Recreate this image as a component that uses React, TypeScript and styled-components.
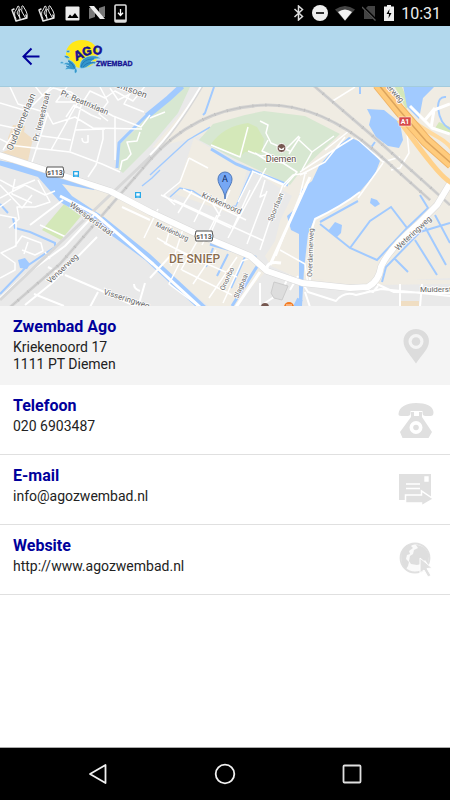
import React from 'react';
import styled, { createGlobalStyle } from 'styled-components';

const GlobalStyle = createGlobalStyle`
  * { box-sizing: border-box; }
  body { margin: 0; background: #fff; font-family: Roboto, "Noto Sans", sans-serif; }
`;

const Screen = styled.div`
  display: flex;
  flex-direction: column;
  min-height: 100vh;
`;

const StatusBar = styled.div`
  display: flex;
  align-items: center;
  justify-content: space-between;
  height: 26px;
  padding: 0 9px 0 11px;
  background: #000;
  color: #ececec;
`;

const StatusGroup = styled.div<{ $gap: number }>`
  display: flex;
  align-items: center;
  gap: ${(p) => p.$gap}px;
  svg { display: block; }
`;

const Clock = styled.time`
  font-size: 16px;
  line-height: 26px;
  font-weight: 400;
  padding-top: 2px;
`;

const AppBar = styled.header`
  display: flex;
  align-items: center;
  gap: 19px;
  height: 61px;
  padding: 0 21px;
  background: #b2d8ed;
  border-bottom: 1px solid #a3cbdd;
`;

const IconButton = styled.button`
  display: flex;
  align-items: center;
  justify-content: center;
  padding: 0;
  border: 0;
  background: none;
  cursor: pointer;
  svg { display: block; }
`;

const MapView = styled.div`
  height: 219px;
  overflow: hidden;
  background: #e9e9e9;
  svg { display: block; width: 100%; height: 100%; }
`;

const ContactRow = styled.a<{ $highlight?: boolean }>`
  display: flex;
  align-items: center;
  justify-content: space-between;
  min-height: ${(p) => (p.$highlight ? 79 : 70)}px;
  padding: 0 16px 0 13px;
  background: ${(p) => (p.$highlight ? '#f4f4f4' : '#fff')};
  border-bottom: ${(p) => (p.$highlight ? 'none' : '1px solid #e0e0e0')};
  color: #222;
  text-decoration: none;
  svg { display: block; flex: none; }
`;

const RowText = styled.div`
  align-self: flex-start;
  padding-top: 10px;
`;

const RowTitle = styled.h2`
  margin: 0 0 2px;
  font-size: 16px;
  line-height: 21px;
  font-weight: 700;
  color: #00009b;
`;

const RowLine = styled.p`
  margin: 0;
  font-size: 14px;
  line-height: 17px;
`;

const NavBar = styled.nav`
  display: flex;
  align-items: center;
  justify-content: center;
  gap: 103px;
  height: 53px;
  margin-top: auto;
  background: #000;
  border-top: 1px solid #aaa;
`;

const HandsIcon = () => (
  <svg width="18" height="18" viewBox="0 0 18 18" fill="none" stroke="#e6e6e6" strokeWidth="1" strokeLinejoin="round" strokeLinecap="round">
    <path d="M3 5 1 6l4 11 11-3-1-3" strokeWidth="1.500" />
    <path d="M5 15Q2 9 5 6l2-4q2 0 1 3L6 9l3 5M9 15 8 9l1-4q2 0 2 3l3 5M11 5Q10 1 12 2l3 5q2 4 1 6l-4 2" />
  </svg>
);
const PictureIcon = () => (
  <svg width="15" height="15" viewBox="0 0 15 15">
    <rect x=".5" y=".5" width="14" height="14" rx="1" fill="#eee" />
    <path d="m2.500 12 2.500-3.500 2 2L10 7l3.500 5z" fill="#000" />
  </svg>
);
const NIcon = () => (
  <svg width="16" height="14" viewBox="0 0 16 14">
    <path d="M0 2h6v9l-6 2zM10 2l6-2v11h-6z" fill="#777" />
    <path d="M0 0h5l11 13h-5z" fill="#eee" />
  </svg>
);
const DownloadIcon = () => (
  <svg width="13" height="19" viewBox="0 0 13 19">
    <rect x="1" y="1" width="11" height="17" rx="1" fill="none" stroke="#ddd" strokeWidth="1.600" />
    <path d="M1 15.500h11V18H1z" fill="#ddd" />
    <path d="M6.500 5v6M4 8.800l2.500 2.700L9 8.800" fill="none" stroke="#fff" strokeWidth="1.300" />
  </svg>
);
const BluetoothIcon = () => (
  <svg width="12" height="16" viewBox="0 0 12 16" fill="none" stroke="#ddd" strokeWidth="1.500">
    <path d="m1.500 4 8 7.500-4 3.500V1l4 3.500-8 7.500" />
  </svg>
);
const DoNotDisturbIcon = () => (
  <svg width="16" height="16" viewBox="0 0 16 16">
    <circle cx="8" cy="8" r="8" fill="#eee" />
    <path d="M4 8h8" stroke="#000" strokeWidth="1.600" />
  </svg>
);
const WifiIcon = () => (
  <svg width="20" height="17" viewBox="0 0 20 17">
    <path d="M0 4.500Q10-2.500 20 4.500L10 16z" fill="#444" />
    <path d="M3 7Q10 2 17 7l-7 8.500z" fill="#f2f2f2" />
  </svg>
);
const NoSimIcon = () => (
  <svg width="15" height="16" viewBox="0 0 15 16">
    <path d="M6 1h7v13H2V5z" fill="#444" />
    <path d="m0 1 14 14" stroke="#000" strokeWidth="2.500" />
    <path d="m0 2 13.500 13.500" stroke="#555" strokeWidth="1.300" />
  </svg>
);
const BatteryIcon = () => (
  <svg width="10" height="16" viewBox="0 0 10 16">
    <path d="M3 0h4v1.500h3V16H0V1.500h3z" fill="#eee" />
    <path d="M5.500 4 2.500 9H5l-.5 4.500 3-5.500H5z" fill="#000" />
  </svg>
);

const BackIcon = () => (
  <svg width="20" height="20" viewBox="0 0 20 20" fill="none" stroke="#00009b" strokeWidth="2">
    <path d="M18.500 10.500h-16M10.500 2.500l-8 8 8 8" />
  </svg>
);

const Logo = () => (
  <svg width="76" height="36" viewBox="60 39 76 36" role="img" aria-label="Ago Zwembad">
    <ellipse cx="82" cy="55" rx="16" ry="14" fill="#ffe817" />
    <g fill="#3596cb" stroke="#b2e1f5" strokeWidth=".6">
      <path d="M80 69c-1-6 3-11 10-12 6-1 9 1 11 3-5-1-8 0-10 3 3-1 5 0 7 1-6 0-8 2-11 4-2 1-5 2-7 1z" />
      <path d="M76 71c1-5-3-9-9-11 2 2 1 3 2 4-3-1-5 0-6 2 3-1 5 0 7 2-3-1-4 1-5 3 4-2 6 0 11 0z" />
      <path d="M64 57c1-1 4-1 6 2-3 1-5 0-6-2zM66 52c2-1 4-1 4 1-2 1-3 1-4-1zM60 64c1-2 3-1 4 0-1 1-3 1-4 0zM75 69c2 0 3 4 1 5s-2-3-1-5z" />
    </g>
    <path d="M81 68c2-6 6-8 13-8M83 68c3-4 7-5 12-4M68 62q5 2 7 8M66 67l4 1" fill="none" stroke="#1d76b5" strokeWidth=".9" />
    <g fill="#151292" stroke="#151292" strokeWidth=".6" fontFamily="Liberation Sans" fontWeight="700">
      <text x="76" y="62" fontSize="13" transform="rotate(-24 76 62)">A</text>
      <text x="83" y="57" fontSize="12" transform="rotate(-10 83 57)">G</text>
      <text x="92" y="54" fontSize="12" transform="rotate(14 92 54)">O</text>
    </g>
    <text x="96" y="67" fontSize="7" fontWeight="700" fontFamily="Liberation Sans" fill="#151292" stroke="#151292" strokeWidth=".3">ZWEMBAD</text>
  </svg>
);

const Shield = ({ x, y }: { x: number; y: number }) => (
  <g>
    <path d={`M${x - 8} ${y - 5}h16l1 5-1 5h-16l-1-5z`} fill="#fff" stroke="#555" strokeWidth="1" />
    <text x={x} y={y + 3} textAnchor="middle" fontSize="7" fontWeight="700" fill="#555">s113</text>
  </g>
);

const StationMark = ({ x, y }: { x: number; y: number }) => (
  <g>
    <rect x={x - 3} y={y - 3} width="6" height="6" fill="#28a8e8" />
    <path d={`M${x - 1.5} ${y - 1.5}h3v2h-3zM${x - 1.5} ${y + 2}h3`} fill="#fff" stroke="#fff" strokeWidth=".5" />
  </g>
);

const railways = [
  'M8 309 L60 264 L118 197 L150 160 C180 126 218 106 268 105 C310 105 345 125 375 151 L430 200',
  'M313 85 L375 138 L450 205',
];

const mainRoad = 'M-4 154 L55 173 L110 191 L150 212 L195 233 L250 256 L267 271 L302 283 L350 288 L368 287 Q379 281 381 267 Q388 250 418 224 L437 205 L452 180';

const CityMap = () => (
  <svg viewBox="0 87 450 219" preserveAspectRatio="xMidYMid slice" role="img" aria-label="Kaart van Diemen">
    <rect y="80" width="450" height="235" fill="#e9e9e9" />
    <g fill="#f0ece3">
      <path d="M202 85h248v193l-75 4-75-3-29-13-6-10 10-15 5-20 12-25-91-60-49 12 36-43z" />
      <path d="M194 138 247 170 235 215 175 194z" />
      <path d="M30 170 55 173 110 192 150 214 195 235 250 257 267 270 235 306 208 306 150 256 85 208z" />
    </g>
    <path d="M302 280h148v4l-77 1-71-1z" fill="#f0ece3" />
    <path d="M13 125 25 126 24 132 33 139 31 147 28 161 0 153 8 150 8 138zM0 158 57 174 80 185 33 174z" fill="#f0dec3" />
    <path d="M401 301h18v5h-18z" fill="#f0dec3" />
    <g fill="#d7e7d1">
      <path d="M150 113 138 127 119 145 118 169 123 173 151 145 178 113 190 87H181z" />
      <path d="M199 140 213 124 245 115 264 111 305 116 340 134 324 149 300 172 290 185 235 159z" />
    </g>
    <g fill="#d4e8b9">
      <path d="M211 144Q224 126 248 123L257 127 264 139 262 153 245 152 240 157z" />
      <path d="M64 204 L81 216 L61 240 L42 230z" />
      <path d="M394 85h7l9 20-4 4zM434 130l5-8 11 5v8z" />
    </g>
    <g fill="#a1caff">
      <path d="M349 137 L363 143 L373 152 L380 161 L375 174 L357 195 L337 208 L314 220 L308 234 L304 270 L302 306 H299 V234 L291 230 L287 216 L295 209 L301 190 L312 181 L319 166 L333 150z" />
      <path d="M367 109 L384 110 L400 123 L403 140 L399 148 L388 146 L376 137 L369 125 L371 117z" />
      <path d="M403 85 H436 L423 98 L419 119 L407 107z" />
      <path d="M18 260 L25 258 L30 264 L27 269 L20 268z" />
      <path d="M328 231 L335 222 L342 225 L341 233 L337 237z" />
      <path d="M371 198 L377 200 L380 204 L375 207 L370 203z" />
      <path d="M-2 160 L38 168 L60 178 L95 187 L94 190 L62 184 L72 196 L104 217 L150 254 L207 307 H196 L145 260 L88 218 L60 202 L38 177 L-2 165z" />
    </g>
    <g fill="none" stroke="#a1caff">
      <path d="m147 116 22-18 13-12M300 299l-4 8" strokeWidth="6" />
      <path d="M150 112 119 143 117 168M211 149 236 164 288 185M210 244 255 257 258 265 232 306" strokeWidth="3" />
      <path d="M0 294 27 266 55 247 55 243 30 232 15 228 13 218M0 204 8 213M214 87 205 113 203 115M446 97Q438 96 438 108Q440 124 450 129M360 86v8M370 149l5-7" strokeWidth="2" />
      <path d="m209 128-21 12-38 35M193 137l17-10M251 172l-15 34-10 2M170 197l10-9 13 3 14 9M142 186l10-8 8-8M228 195l-3 3" strokeWidth="1.400" />
      <path d="M320 224 350 248 377 260 407 228 391 207 370 221 350 248M320 222 358 201M407 228 428 208 420 195M382 282 386 267 420 232 450 223M415 240l22 35M425 227l21 38M435 215l15 28M394 258l14 14" strokeWidth="2" />
      <path d="m213 248-7 19M228 254l-11 22M245 257l-14 31" strokeWidth="2" />
    </g>
    <g fill="none" stroke="#fff" strokeWidth="1.500" strokeLinejoin="round">
      <path d="M0 103l27 8 25-25M10 87 18 104 47 113 53 124 75 117 93 128 142 129M27 111 3 150M48 113 31 165 28 162M79 100 51 150M82 102 70 151M57 89l30 13 26 14 28 11 9-12M67 87l-11 15 31 0M35 86l8 10 10-8 18 4 12 10 7-11 15 7 10-7 18 10 13-16M0 125l14 3M0 139l8 4M8 145l62 7 32 12 18 8M103 129 103 139 96 165 88 177M115 117v43M75 130l30-1M88 135v7q-6 2-6-4M66 117l8-12 17 10 10 4M35 135l36 5" />
      <path d="M120 170l2-9 5-2 4-5-4-12 10-1 3-9M132 90l-8 14 20 8M150 118l15-6M110 88l8 12 12-6M100 87l8 15-9 12 9 7" />
      <path d="M0 180l15 8 20-8M0 198l25-13 20 10 10-4M15 179l-3 15 20 9M38 180l12 22-15 5-18 0 2 12-10 9M0 185l22 23 10-13M0 207l11-8M0 215l16 3 0 28-15 7 14 10 0 7-15 8M15 246l7-10 19 7 2 8-8 4-13-5M45 252l5 7M28 242l-4 12M40 225l26 12" />
      <path d="M0 298 25 275 65 246 95 214M63 200l-33 25M25 305l27-22 45-46M65 275l37 16 48 22M34 294l30 12M98 292l-8 15M145 283l-7 24M134 284q0 5 6 7M122 207l28 13M63 275l-15-8M150 278l22-24" strokeWidth="2" />
      <path d="M180 182 189 158M189 158l19 10M180 182l-16 13 11 10M208 196l12 20M202 245l15-30M250 190l-18 40M252 171l31 14 10-10 14-2M253 172l-15 30M161 195l70 33M174 200l90 41M183 189l63 31M178 213l14-22M194 222l14-28M212 230l18-40M228 238l38-70M247 244l20-53M260 250l15-45M260 174l23 10-5 15M265 180l-5 17 6-3" />
      <path d="M158 209 144 238M172 222 166 243M183 229 171 266M200 236 181 270M216 250 193 284M237 257l-28 41M164 243l33 16M182 253l55 24M157 238l45 26M182 270l50 25M179 264l-10 20 28 21M250 258l-8 3-19 42" />
      <path d="M305 174 300 195 276 256M280 250 305 264 308 285M355 87l-24 15M300 172q30-20 53-34M325 150l24-19M300 175l25-13 20-25M355 137l28 25 17-5M383 163l-25 35M407 133l2 20-9 15-9 2" />
      <path d="M260 121l8 4-2 8 5 10 19 8M268 140l-6 11 22 10M248 127l-8 30-29-12M248 151l13 5 7-1 16 8M255 153l11 7 17 3 14 9-13 15M284 151l15-15M289 154l11-17M299 140l13 12-10 18M312 152l22-16" />
      <path d="M310 285q-2-48 5-66 27-13 45-27M303 284l5 8 28 9q8-10 20-6l25-6 70 7M355 287l18 5 5-6M400 284v22M305 292l5 15M377 284l17 8 56 1M420 307l2-23M260 283v22M290 275l-10 18-18 12M298 276l-8 14" strokeWidth="2" />
      <path d="M410 106l22 22 18 6M431 128l3-18 16-6M425 120l10-12" strokeWidth="3" />
    </g>
    <path d="M271 293l3-11 14 4-6 14-8-2z" fill="#ddd" stroke="#ccc" strokeWidth="1" />
    <path d="M202 86Q175 132 150 157L0 300" fill="none" stroke="#d8d8d8" strokeWidth="3" />
    <path d="M201 86Q175 130 150 155" fill="none" stroke="#fff" strokeWidth="2" />
    {railways.map((d) => (
      <g key={d} fill="none">
        <path d={d} stroke="#d2d2d2" strokeWidth="3" />
        <path d={d} stroke="#bdbdbd" strokeWidth="3" strokeDasharray="1 12" />
        <path d={d} stroke="#c5c5c5" strokeWidth="1" />
      </g>
    ))}
    <g fill="none" strokeLinejoin="round">
      <path d={mainRoad} stroke="#dadada" strokeWidth="7" />
      <path d={mainRoad} stroke="#fff" strokeWidth="6" />
      <path d="m60 196 35 18 58 50 48 44M260 272 236 307M270 265 310 177M267 272q-2-12 14-9" stroke="#fff" strokeWidth="3" />
    </g>
    <g fill="none">
      <path d="M399 120Q419 148 432 164T452 183" stroke="#ffd18a" strokeWidth="5" />
      <path d="M405 116q20 14 31 20t16 13" stroke="#ffda9f" strokeWidth="4" />
      <path d="M378 84 400 111 426 141 452 164" stroke="#f0b568" strokeWidth="12" />
      <path d="M378 84 400 111 426 141 452 164" stroke="#ffcb7c" strokeWidth="10" />
      <path d="M378 84 400 111 426 141 452 164" stroke="#dda45d" strokeWidth="1.500" />
    </g>
    <rect x="399" y="117" width="12" height="9" fill="#d74949" stroke="#fff" strokeWidth=".5" />
    <text x="405" y="124" textAnchor="middle" fontSize="7" fontWeight="700" fill="#fff">A1</text>
    <Shield x={55} y={172} />
    <Shield x={204} y={236} />
    <StationMark x={76} y={174} />
    <StationMark x={138} y={195} />

    <g fill="#666" stroke="#fff" strokeWidth="1.500" paintOrder="stroke" fontSize="8">
      <text transform="translate(12 151) rotate(-67)" fontSize="9">Ouddiemerlaan</text>
      <text transform="translate(38 142) rotate(-76)">Pr. Irenestraat</text>
      <text transform="translate(60 95) rotate(23)">Pr. Beatrixlaan</text>
      <text transform="translate(108 84) rotate(21)" fontSize="9">Plantsoen</text>
      <text transform="translate(69 206) rotate(36)">Weesperstraat</text>
      <text transform="translate(50 284) rotate(-43)">Venserweg</text>
      <text transform="translate(103 294) rotate(18)">Visseringweg</text>
      <text transform="translate(155 226) rotate(25)" fontSize="7">Mariënburg</text>
      <text transform="translate(201 197) rotate(24)">Kriekenoord</text>
      <text transform="translate(272 222) rotate(-67)" fontSize="7">Sportlaan</text>
      <text transform="translate(224 291) rotate(-65)" fontSize="7">Onoribo</text>
      <text transform="translate(238 299) rotate(-67)" fontSize="7">Slagbaai</text>
      <text transform="translate(312 277) rotate(-88)" fontSize="7">Overdiemerweg</text>
      <text transform="translate(398 251) rotate(-43)">Weteringweg</text>
      <text transform="translate(386 87) rotate(48)">erweg</text>
      <text transform="translate(420 292)">Muiderstr</text>
      <text x="281" y="162" textAnchor="middle" fontSize="9" fill="#5b4840">Diemen</text>
      <text x="169" y="263" fontSize="12" fontWeight="500" fill="#8a6d50">DE SNIEP</text>
    </g>
    <circle cx="281.500" cy="148" r="4.500" fill="#765850" stroke="#fff" />
    <path d="M278.500 147l3 2 3-2-1 3h-4z" fill="#fff" />
    <circle cx="265" cy="307" r="4" fill="#765850" />
    <circle cx="289" cy="307" r="5" fill="#f37c22" />
    <path d="M287 304v3M289 304v3M291 304v3" stroke="#fff" strokeWidth=".8" />
    <path d="M225 199C225 190 218 186 218 179a7 7 0 0 1 14 0c0 7-7 11-7 20z" fill="#76a7f4" stroke="#4d78ba" strokeWidth="1" />
    <text x="225" y="182" textAnchor="middle" fontSize="9" fill="#102b62">A</text>
  </svg>
);

const PinIcon = () => (
  <svg width="35" height="36" viewBox="0 0 35 36">
    <path fillRule="evenodd" fill="#dcdcdc" d="M17 1C10 1 4.500 6 4.500 13c0 8 7 14 12.500 22.500C22.500 27 30 21 30 13 30 6 24 1 17 1zm0 5a7.500 7.500 0 1 1 0 15 7.500 7.500 0 0 1 0-15z" />
    <circle cx="17" cy="13.500" r="4.300" fill="#dcdcdc" />
  </svg>
);
const PhoneIcon = () => (
  <svg width="36" height="36" viewBox="0 0 36 36" fill="#e0e0e0">
    <path d="M.5 12C1 5 8 1 18 1s17 3 17.500 9c0 3-1 4-3 4h-5c-2 0-3-1-3-4V9h-12v2c0 2-1 3-3 3H3c-2 0-2.500-1-2.500-2z" />
    <path fillRule="evenodd" d="M13 10h3v4h5v-4h3v5l10 15-3.500 6h-26L2 30l11-15zm5 9a6.500 6.500 0 1 0 0 13 6.500 6.500 0 0 0 0-13z" />
    <circle cx="18" cy="25.500" r="2.800" />
  </svg>
);
const MailIcon = () => (
  <svg width="36" height="34" viewBox="0 0 36 34">
    <path d="M1 1h32v26H1z" fill="#e0e0e0" />
    <path d="M27 4h3v4h-3zM8 11h14M8 15.500h14" fill="#fff" stroke="#fff" strokeWidth="1.400" />
    <path d="M7.500 22h16v-4l12 8-12 7v-3h-16z" fill="#e0e0e0" stroke="#fff" strokeWidth="1.500" />
  </svg>
);
const WebIcon = () => (
  <svg width="35" height="36" viewBox="0 0 35 36">
    <circle cx="16" cy="16" r="14.500" fill="#fafafa" stroke="#e0e0e0" strokeWidth="1.800" />
    <path d="M3 10C5 4 9 2 15 2l-3 2 2 2-4 3 1 3-3 1-1 4 3 3-1 4-2 3C3 24 1 17 3 10zM17 3c7 0 12 5 13 11l-1 8-3-4-4 4-4 1-6-1-2-3 1-5 3-2 1-4 4-2z" fill="#dedede" />
    <path d="m21 16 12 10-5 .500 4 7-3 1.500-4-7-4 3z" fill="#e0e0e0" stroke="#fff" />
  </svg>
);

const contacts = [
  { title: 'Zwembad Ago', lines: ['Kriekenoord 17', '1111 PT Diemen'], href: 'geo:0,0?q=Kriekenoord+17+Diemen', Icon: PinIcon, highlight: true },
  { title: 'Telefoon', lines: ['020 6903487'], href: 'tel:0206903487', Icon: PhoneIcon },
  { title: 'E-mail', lines: ['info@agozwembad.nl'], href: 'mailto:info@agozwembad.nl', Icon: MailIcon },
  { title: 'Website', lines: ['http://www.agozwembad.nl'], href: 'http://www.agozwembad.nl', Icon: WebIcon },
];

export default function App() {
  return (
    <>
      <GlobalStyle />
      <Screen>
        <StatusBar>
          <StatusGroup $gap={9}>
            <HandsIcon />
            <HandsIcon />
            <PictureIcon />
            <NIcon />
            <DownloadIcon />
          </StatusGroup>
          <StatusGroup $gap={7}>
            <BluetoothIcon />
            <DoNotDisturbIcon />
            <WifiIcon />
            <NoSimIcon />
            <BatteryIcon />
            <Clock>10:31</Clock>
          </StatusGroup>
        </StatusBar>
        <AppBar>
          <IconButton type="button" aria-label="Terug"><BackIcon /></IconButton>
          <Logo />
        </AppBar>
        <MapView><CityMap /></MapView>
        <main>
          {contacts.map(({ title, lines, href, Icon, highlight }) => (
            <ContactRow key={title} href={href} $highlight={highlight}>
              <RowText>
                <RowTitle>{title}</RowTitle>
                {lines.map((line) => <RowLine key={line}>{line}</RowLine>)}
              </RowText>
              <Icon />
            </ContactRow>
          ))}
        </main>
        <NavBar>
          <IconButton type="button" aria-label="Vorige">
            <svg width="24" height="24" viewBox="0 0 24 24"><path d="M19.500 3v18L4 12z" fill="none" stroke="#f0f0f0" strokeWidth="1.800" strokeLinejoin="round" /></svg>
          </IconButton>
          <IconButton type="button" aria-label="Startscherm">
            <svg width="24" height="24" viewBox="0 0 24 24"><circle cx="12" cy="12" r="9.300" fill="none" stroke="#f0f0f0" strokeWidth="1.800" /></svg>
          </IconButton>
          <IconButton type="button" aria-label="Overzicht">
            <svg width="24" height="24" viewBox="0 0 24 24"><rect x="3.500" y="3.500" width="17" height="17" rx="1" fill="none" stroke="#e0e0e0" strokeWidth="1.800" /></svg>
          </IconButton>
        </NavBar>
      </Screen>
    </>
  );
}
